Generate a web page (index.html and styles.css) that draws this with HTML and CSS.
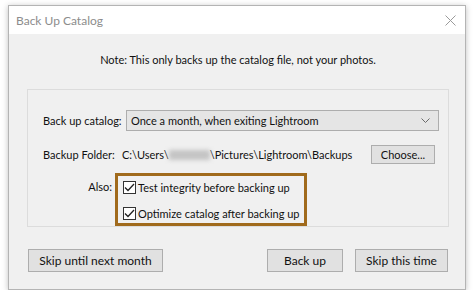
FILE: index.html
```html
<!DOCTYPE html>
<html lang="en">
<head>
    <meta charset="UTF-8">
    <title>Back Up Catalog</title>
    <link rel="stylesheet" href="styles.css">
</head>
<body>
    <div class="dialog">
        <header class="titlebar">
            <span class="title">Back Up Catalog</span>
            <svg class="close" width="11" height="11" viewBox="0 0 11 11">
                <path d="M0.5 0.5 L10.5 10.5 M10.5 0.5 L0.5 10.5" stroke="#9a9a9a" stroke-width="1"/>
            </svg>
        </header>
        <div class="content">
            <p class="note">Note: This only backs up the catalog file, not your photos.</p>

            <section class="panel">
                <div class="row">
                    <span class="label">Back up catalog:</span>
                    <div class="select">
                        <span>Once a month, when exiting Lightroom</span>
                        <svg width="9" height="6" viewBox="0 0 9 6">
                            <path d="M0.5 0.5 L4.5 4.5 L8.5 0.5" fill="none" stroke="#6a6a6a" stroke-width="1"/>
                        </svg>
                    </div>
                </div>

                <div class="row folder">
                    <span class="label">Backup Folder:</span>
                    <span class="path">C:\Users\<span class="blur"></span>\Pictures\Lightroom\Backups</span>
                    <button class="btn choose">Choose...</button>
                </div>

                <div class="row also">
                    <span class="also-label">Also:</span>
                    <div class="highlight">
                        <label class="check"><span class="box"><svg width="11" height="9" viewBox="0 0 11 9"><path d="M1 4.5 L4 7.5 L10 1" fill="none" stroke="#222" stroke-width="1.3"/></svg></span>Test integrity before backing up</label>
                        <label class="check"><span class="box"><svg width="11" height="9" viewBox="0 0 11 9"><path d="M1 4.5 L4 7.5 L10 1" fill="none" stroke="#222" stroke-width="1.3"/></svg></span>Optimize catalog after backing up</label>
                    </div>
                </div>
            </section>

            <footer class="actions">
                <button class="btn skip-month">Skip until next month</button>
                <div class="right">
                    <button class="btn backup">Back up</button>
                    <button class="btn skip-time">Skip this time</button>
                </div>
            </footer>
        </div>
    </div>
</body>
</html>
```

FILE: styles.css
```css
* {
    box-sizing: border-box;
}
body {
    margin: 0;
    padding: 5px 8px 0;
    background: #ffffff;
    font-family: Lato, "Noto Sans", sans-serif;
    font-size: 11px;
    color: #111;
    white-space: nowrap;
}
.dialog {
    width: 458px;
    height: 285px;
    border: 1px solid #b4b4b4;
    background: #f0f0f0;
    box-shadow: 0 1px 6px rgba(0, 0, 0, 0.25);
    display: flex;
    flex-direction: column;
}
.titlebar {
    height: 28px;
    background: #ffffff;
    display: flex;
    align-items: center;
    justify-content: space-between;
    padding: 0 9px 0 7px;
}
.title {
    font-size: 12px;
    color: #8c8c8c;
}
.content {
    flex: 1;
    display: flex;
    flex-direction: column;
    padding: 0 16px 0 18px;
}
.note {
    margin: 18px 0 0;
    text-align: center;
    line-height: 16px;
}
.panel {
    margin-top: 21px;
    height: 138px;
    border: 1px solid #dcdcdc;
    padding: 20px 9px 0 15px;
    display: flex;
    flex-direction: column;
}
.row {
    display: flex;
    align-items: center;
}
.label {
    width: 83px;
    flex: none;
}
.select {
    flex: 1;
    height: 21px;
    border: 1px solid #adadad;
    background: #e5e5e5;
    display: flex;
    align-items: center;
    justify-content: space-between;
    padding: 0 8px 0 4px;
}
.folder {
    margin-top: 14px;
}
.path {
    flex: 1;
    margin-left: -4px;
    display: flex;
    align-items: center;
}
.blur {
    display: inline-block;
    width: 41px;
    height: 10px;
    background: #c4c4c4;
    filter: blur(2px);
}
.btn {
    font-family: inherit;
    font-size: 12px;
    color: #111;
    background: #e1e1e1;
    border: 1px solid #adadad;
    padding: 0;
    height: 23px;
}
.choose {
    width: 64px;
    height: 19px;
    font-size: 11px;
    margin-right: 4px;
}
.also {
    margin-top: 9px;
    align-items: flex-start;
}
.also-label {
    width: 69px;
    margin-right: 3px;
    text-align: right;
    margin-top: 7px;
}
.highlight {
    width: 192px;
    height: 53px;
    border: 3px solid #a06a1c;
    display: flex;
    flex-direction: column;
    gap: 13px;
    padding: 5px 0 0 5px;
}
.check {
    display: flex;
    align-items: center;
    gap: 2px;
    height: 13px;
}
.box {
    flex: none;
    width: 13px;
    height: 13px;
    border: 1px solid #333;
    background: #ffffff;
    display: flex;
    align-items: center;
    justify-content: center;
}
.actions {
    margin-top: 22px;
    display: flex;
    justify-content: space-between;
    padding: 0 1px;
}
.right {
    display: flex;
    gap: 12px;
}
.skip-month {
    width: 135px;
}
.backup {
    width: 76px;
}
.skip-time {
    width: 93px;
}
```
